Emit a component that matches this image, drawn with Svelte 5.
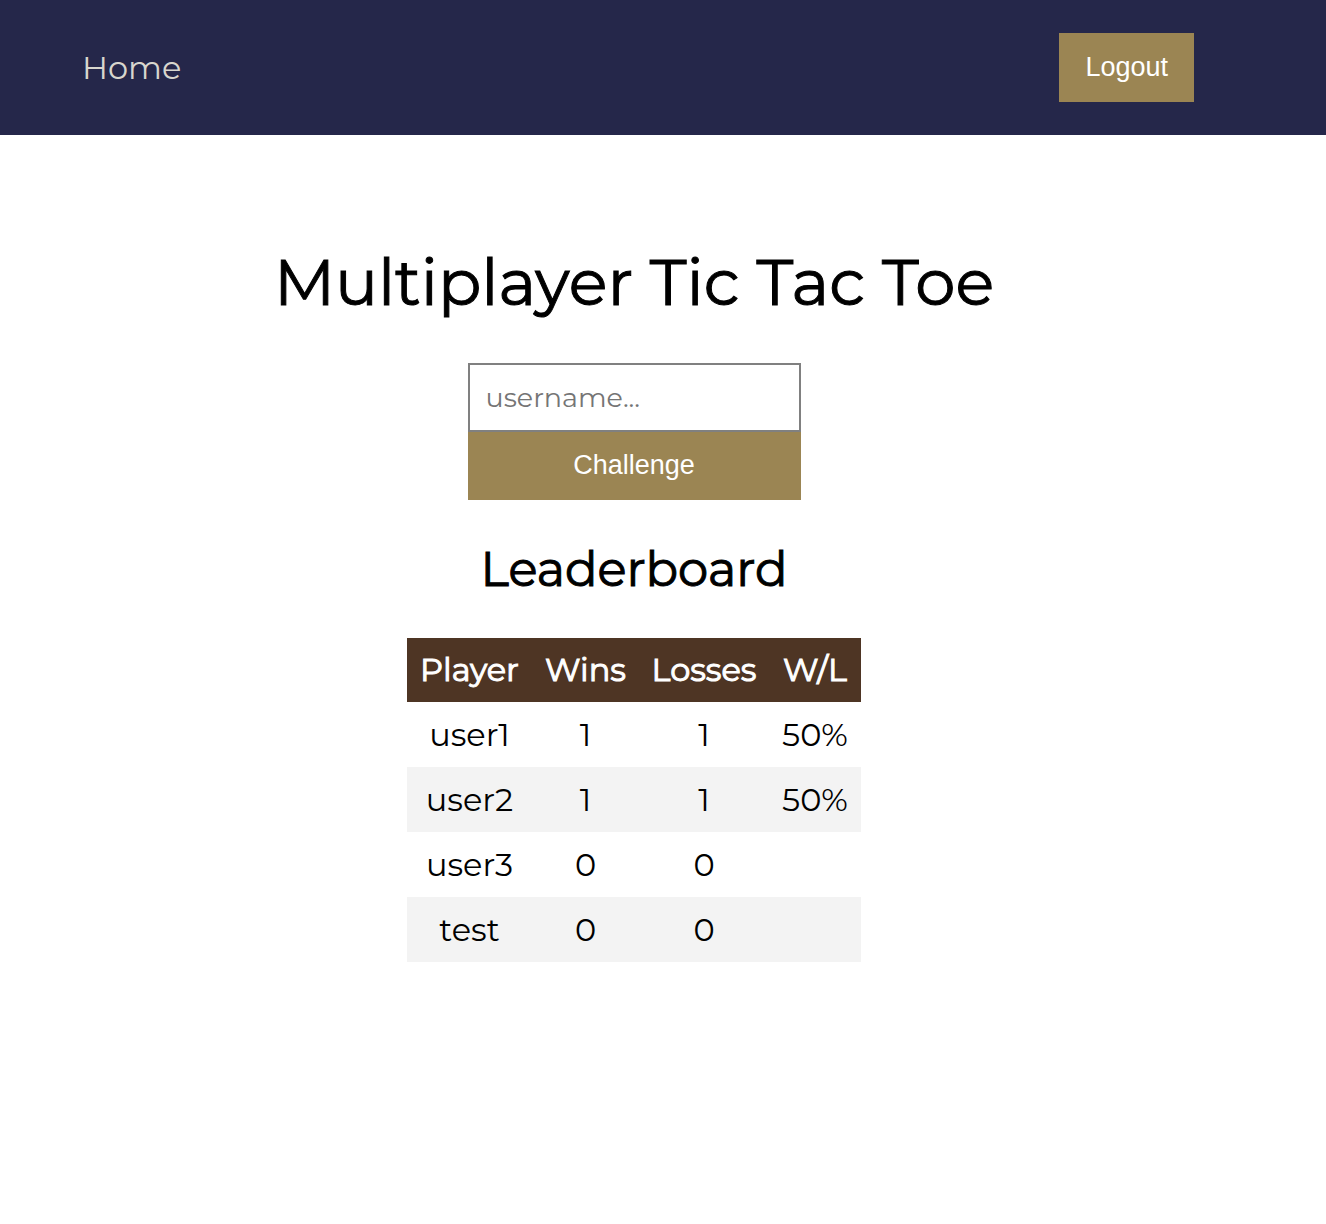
<script>
  let username = $state('');

  const players = [
    { name: 'user1', wins: 1, losses: 1, ratio: '50%' },
    { name: 'user2', wins: 1, losses: 1, ratio: '50%' },
    { name: 'user3', wins: 0, losses: 0, ratio: '' },
    { name: 'test', wins: 0, losses: 0, ratio: '' }
  ];
</script>

<header>
  <nav aria-label="Main"><a href="/">Home</a></nav>
  <button class="logout" type="button">Logout</button>
</header>

<main>
  <h1>Multiplayer Tic Tac Toe</h1>

  <form onsubmit={(event) => event.preventDefault()}>
    <input type="text" aria-label="Username" placeholder="username..." bind:value={username} />
    <button type="submit">Challenge</button>
  </form>

  <h2>Leaderboard</h2>

  <table>
    <thead>
      <tr>
        <th class="player" scope="col">Player</th>
        <th class="wins" scope="col">Wins</th>
        <th class="losses" scope="col">Losses</th>
        <th class="ratio" scope="col">W/L</th>
      </tr>
    </thead>
    <tbody>
      {#each players as player (player.name)}
        <tr>
          <td>{player.name}</td>
          <td>{player.wins}</td>
          <td>{player.losses}</td>
          <td>{player.ratio}</td>
        </tr>
      {/each}
    </tbody>
  </table>
</main>

<style>
  :global(body) {
    margin: 0;
    background: #fff;
    color: #000;
    font-family: Montserrat, Inter, sans-serif;
    font-size: 32px;
  }

  header {
    display: flex;
    align-items: center;
    justify-content: space-between;
    padding: 33px 132px 33px 82px;
    background: #25274a;
  }

  header a {
    color: #d8d6ce;
    line-height: 40px;
    text-decoration: none;
  }

  button {
    box-sizing: border-box;
    height: 68px;
    padding: 0 26px 1px;
    border: 0;
    background: #9b8553;
    color: #fff;
    font-family: "Liberation Sans", Arial, sans-serif;
    font-size: 27px;
    cursor: pointer;
  }

  .logout {
    height: 69px;
  }

  main {
    display: flex;
    flex-direction: column;
    align-items: center;
    padding: 107px 58px 64px 0;
  }

  h1,
  h2,
  th {
    font-weight: 400;
    -webkit-text-stroke: 1px currentColor;
  }

  h1,
  h2 {
    margin: 0;
    text-align: center;
  }

  h1 {
    font-size: 64px;
    line-height: 80px;
  }

  h2 {
    margin: 39px 0;
    font-size: 48px;
    line-height: 60px;
  }

  form {
    display: flex;
    flex-direction: column;
    width: 333px;
    margin-top: 41px;
  }

  input {
    box-sizing: border-box;
    width: 100%;
    height: 69px;
    padding: 0 16px;
    border: 2px solid #808080;
    border-radius: 0;
    background: #fff;
    color: #000;
    font-family: inherit;
    font-size: 27px;
  }

  input::placeholder {
    color: #757575;
    opacity: 1;
  }

  table {
    width: 454px;
    table-layout: fixed;
    border-collapse: collapse;
    line-height: 40px;
    text-align: center;
  }

  th {
    height: 64px;
    padding: 0;
    background: #4e3524;
    color: #fff;
  }

  td {
    height: 65px;
    padding: 0;
  }

  tbody tr:nth-child(even) {
    background: #f3f3f3;
  }

  .player {
    width: 125px;
  }

  .wins {
    width: 107px;
  }

  .losses {
    width: 130px;
  }

  .ratio {
    width: 92px;
  }
</style>
